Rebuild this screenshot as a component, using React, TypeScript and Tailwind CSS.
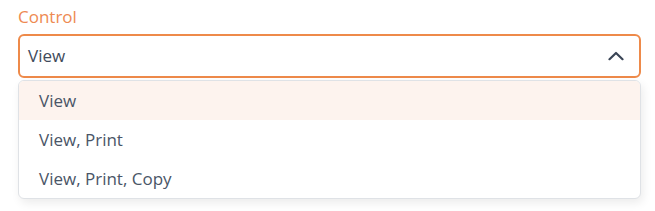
import React from "react";

export default function App() {
  const items = ["View", "View, Print", "View, Print, Copy"];
  return (
    <div className="w-[655px] h-[211px] bg-white font-['Open_Sans',sans-serif] px-[18px] pt-[4px]">
      <div className="w-[623px]">
        <div className="text-[17px] leading-[25px] text-[#ee8a52]">Control</div>
        <div className="mt-[5px] h-[44px] rounded-[6px] border-2 border-[#ee8a4a] flex items-center justify-between pl-[8px] pr-[15px]">
          <span className="text-[17px] text-[#414b5b]">View</span>
          <svg width="16" height="10" viewBox="0 0 16 10" className="text-[#3a4556]">
            <path d="M1.5 8.2 L8 2 L14.5 8.2" fill="none" stroke="currentColor" strokeWidth="2.2" strokeLinecap="round" strokeLinejoin="round" />
          </svg>
        </div>
        <div className="mt-[2px] rounded-[6px] border border-[#dfe2e6] bg-white shadow-[2px_4px_10px_rgba(0,0,0,0.08)] overflow-hidden">
          {items.map((it, i) => (
            <div
              key={it}
              className={`h-[39px] flex items-center pl-[20px] text-[17px] text-[#4a5567] ${i === 0 ? "bg-[#fdf3ee]" : ""}`}
            >
              {it}
            </div>
          ))}
        </div>
      </div>
    </div>
  );
}
